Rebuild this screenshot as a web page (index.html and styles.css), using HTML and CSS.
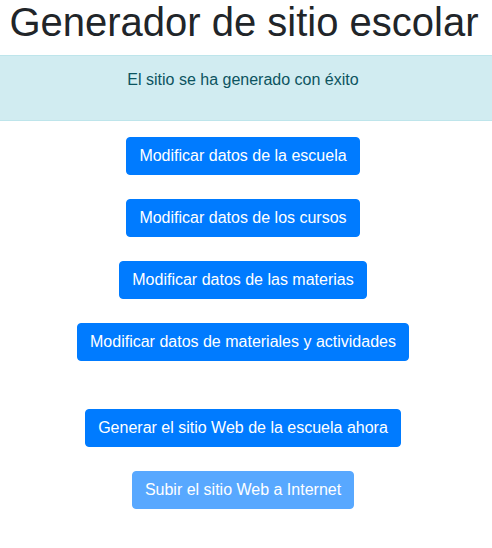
FILE: index.html
```html
<!DOCTYPE html>
<html lang="es">
<head>
<meta charset="utf-8">
<title>Generador de sitio escolar</title>
<link rel="stylesheet" href="styles.css">
</head>
<body>
<h1 class="title">Generador de sitio escolar</h1>
<div class="alert"><p class="alert-text">El sitio se ha generado con éxito</p></div>
<div class="actions">
  <button class="btn">Modificar datos de la escuela</button>
  <button class="btn">Modificar datos de los cursos</button>
  <button class="btn">Modificar datos de las materias</button>
  <button class="btn">Modificar datos de materiales y actividades</button>
  <button class="btn spaced">Generar el sitio Web de la escuela ahora</button>
  <button class="btn" disabled>Subir el sitio Web a Internet</button>
</div>
</body>
</html>
```
FILE: styles.css
```css
* { box-sizing: border-box; }
body {
  margin: 0;
  font-family: "Liberation Sans", Arial, sans-serif;
  font-size: 16px;
  line-height: 1.5;
  color: #212529;
  background: #fff;
}
.title {
  margin: 0 0 7px;
  padding-right: 4px;
  font-size: 40px;
  font-weight: 400;
  line-height: 48px;
  text-align: center;
  position: relative;
  top: -2px;
}
.alert {
  margin-bottom: 16px;
  padding: 12px 26px 12px 20px;
  background: #d1ecf1;
  border-top: 1px solid #bee5eb;
  border-bottom: 1px solid #bee5eb;
  color: #0c5460;
  text-align: center;
}
.alert-text { margin: 0 0 16px; }
.actions {
  display: flex;
  flex-direction: column;
  align-items: center;
  gap: 24px;
  padding-right: 6px;
}
.btn {
  font-family: inherit;
  font-size: 16px;
  line-height: 24px;
  padding: 6px 12px;
  color: #fff;
  background: #007bff;
  border: 1px solid #007bff;
  border-radius: 4px;
  cursor: pointer;
}
.btn.spaced { margin-top: 24px; }
.btn:disabled { opacity: .65; cursor: default; }
```
